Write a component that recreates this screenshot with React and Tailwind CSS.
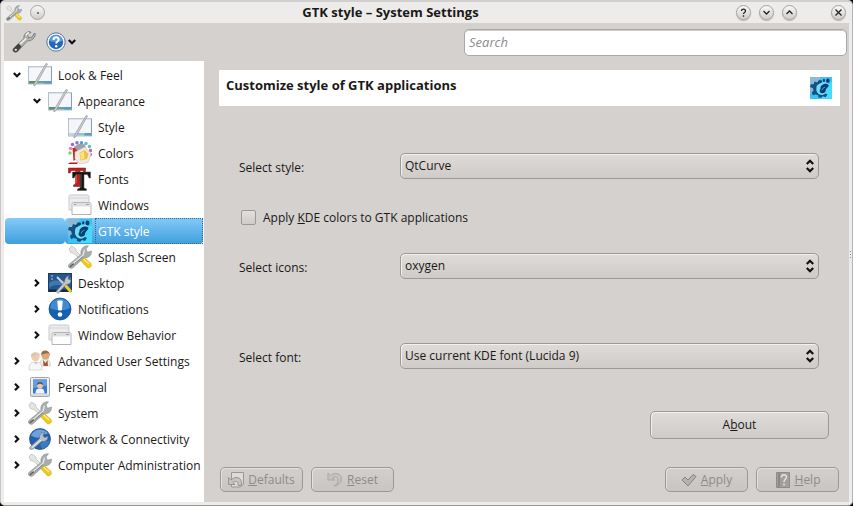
import { clsx } from 'clsx';

const iconBox = 'h-6 w-6 shrink-0';

function ToolsIcon({ className = iconBox }) {
  return (
    <svg viewBox="0 0 24 24" className={className} fill="none">
      <path d="M1 4l2.500-3 4 2.500.5 2.500L15.500 13.500l-2 2L6 8.500 2.500 7.500z" fill="#e4e4e1" stroke="#b0b0ac" strokeWidth=".6" />
      <path d="M15.500 11.500l7.500 7c1.500 2.500-1.500 5.500-4 4L12 15z" fill="#f0c818" stroke="#c9a224" strokeWidth=".5" />
      <path d="M15.500 14l5.500 5" stroke="#ffec7a" strokeWidth="1.600" />
      <path d="M.8 19.500L13 9.500C12 5.500 14.500 1 19 .8h1.500L18 4l1.500 3.300L23.500 6C24 10 20.500 13.500 16.300 12.500L5 22.800C2.500 24.500-1 22 .8 19.500z" fill="#a9adad" stroke="#80868a" strokeWidth=".5" />
      <path d="M4 19.500L15 10.200l1.500-5.500" stroke="#e4e7e6" strokeWidth="1.400" />
      <path d="M1.800 22l4-3.300" stroke="#5e6363" strokeWidth="1.600" />
      <path d="M7 18.500l8-7" stroke="#747b7c" strokeWidth=".8" />
    </svg>
  );
}

function WrenchIcon() {
  return (
    <svg viewBox="0 0 24 24" className={iconBox} fill="none">
      <path d="M1.500 18.500L12 8.500C11.500 5 13.500 2 18 1.500l1 1-3.500 1.500 1 4L20 7l2.500-4 .8.8C23 8 20 11 15.500 10.800L5.500 21.500c-2.500 2-6-.7-4-3z" fill="#b4b4b2" stroke="#6d6d6c" strokeWidth=".8" />
      <path d="M1.500 18.500l5-5 3 3-4 5c-2.500 2-6-.7-4-3z" fill="#424242" />
      <ellipse cx="3.800" cy="19.800" rx="1.300" ry="1.100" fill="#ddd" />
      <path d="M8 14l6-5.500M14 5.500c.5-1.500 1.500-2.500 3-3" stroke="#f4f4f4" strokeWidth="1.500" />
    </svg>
  );
}

function HelpIcon() {
  return (
    <svg viewBox="0 0 20 20" className="h-5 w-5">
      <circle cx="10" cy="10" r="9.200" fill="#f1f4f8" stroke="#53769f" strokeWidth="1" />
      <circle cx="10" cy="10" r="7.200" fill="#2468b5" />
      <path d="M3.500 9a6.500 6 0 0 1 13 0c-4 1.500-9 1.500-13 0z" fill="#5c9bdc" />
      <path d="M7.500 8c0-3.800 5.400-3.400 5.200-.4-.1 1.900-2.500 2-2.500 4" fill="none" stroke="#fff" strokeWidth="2" />
      <circle cx="10.200" cy="14.200" r="1.200" fill="#fff" />
    </svg>
  );
}

function StyleIcon({ green }) {
  return (
    <svg viewBox="0 0 24 24" className={iconBox}>
      <rect x=".5" y="3.500" width="23" height="17.500" fill="#f5f6f9" stroke="#b3c0d0" />
      <path d="M1 4h22" stroke="#c8cfd8" />
      <path d="M1 18h22v2.500H1z" fill={green ? '#69a0a0' : '#8fc0df'} />
      <path d="M1 18h6l-1 2.500H1z" fill={green ? '#5f8e63' : '#c5d4df'} />
      <path d="M17 18h6v2.500h-7z" fill="#5b9ab8" />
      <path d="M23.500 4v17" stroke="#7f9fbc" />
      <path d="M6 21L18 .5l1.500.5L8 21.500 6 23z" fill="#d0d1d3" stroke="#919496" strokeWidth=".7" />
    </svg>
  );
}

const dots = [
  [2, 12, '#8bd13f'], [2.500, 7.500, '#e57bd6'], [4.500, 3.500, '#b356d3'], [9, 1.700, '#6f7fd3'], [13.500, 1.700, '#4e9be0'],
  [18, 2.500, '#50c1d8'], [21.500, 5.500, '#57c9a0'], [22.500, 9.500, '#d760b2'], [22.300, 13.500, '#a44fd0'],
];

function ColorsIcon() {
  return (
    <svg viewBox="0 0 24 24" className={iconBox}>
      {dots.map(([x, y, color]) => (
        <circle key={color} cx={x} cy={y} r="1.700" fill={color} />
      ))}
      <path d="M4.500 7H10v10l-4.500 3z" fill="#c92727" />
      <path d="M6 6l5-3 5.500.5L18 8l-8 2z" fill="#9fa1a8" stroke="#8d9096" strokeWidth=".5" />
      <path d="M7 11l10-5 6 7-3 8.500-8 1.500-5-5z" fill="#efebdf" stroke="#c8c5bb" strokeWidth=".6" />
      <path d="M11.500 11.500L17 9l3.500 4-1.500 5-6.500 1.500z" fill="#efc040" />
      <path d="M12 12l4-1.700.5 7.200-3.500 1.500z" fill="#fadf85" />
      <path d="M2 21.500h8L9 23H0z" fill="#c41212" />
    </svg>
  );
}

function FontsIcon() {
  return (
    <svg viewBox="0 0 24 24" className={iconBox}>
      <path d="M.5 1h17v5h-1.500l-1-2.500h-3V17l2 1v1.500H5.500V18l2-1V3.500h-4L2 6H.5z" fill="#c0201c" stroke="#6b1512" strokeWidth=".5" />
      <path d="M8 4v12" stroke="#ea6a60" />
      <path d="M4.500 5h18v6H21l-1.500-3.500h-3.500V21l2.500 1v1.500h-9V22l2.500-1V7.500H8L6 11H4.500z" fill="#141414" stroke="#555" strokeWidth=".5" />
      <path d="M13 7v14" stroke="#555" />
    </svg>
  );
}

function WindowsIcon() {
  return (
    <svg viewBox="0 0 24 24" className={iconBox}>
      <path d="M1 3.500q0-1.500 1.500-1.500h17q1.500 0 1.500 1.500V17H1z" fill="#ececee" stroke="#c9cacd" />
      <path d="M1.500 5h19" stroke="#d6d6d9" />
      <path d="M4 11q0-1.500 1.500-1.500h16q1.500 0 1.500 1.500v10.500H4z" fill="#fdfdfd" stroke="#b4b5b9" />
      <path d="M4.500 10h18v3.500h-18z" fill="#dededf" />
      <path d="M6 11.500h2M18 11.500h3" stroke="#a2a3a6" />
    </svg>
  );
}

function GtkIcon({ className = iconBox }) {
  return (
    <svg viewBox="0 0 24 24" className={className}>
      <rect width="24" height="24" fill="#3bc4f3" />
      <path d="M0 0h12L5 12 0 18z" fill="#8bb9d6" />
      <path d="M18 10l6-5v19H11z" fill="#45dcfb" />
      <path d="M5 5l3 1 2-3 3 2-2 3-3 2-1 5 2 3 4 1 4-1 2 1-2 3-3-1-2 2-3-1v-2l-3-1-3 1-1-3 2-2-1-3-3-1 1-3h3z" fill="#125183" />
      <path d="M7 12c0-4 3-5 7-6 5-1 7 1 6 4-1 2-3 3-3 6 0 4-6 5-8.500 1.500C7 15.500 7 14 7 12z" fill="#72dbfa" />
      <path d="M11.500 12c0-4 6.500-6 8.500-3.500 1.500 2.500-2.500 3-2.800 6-.3 3.500-5 4.500-6.500 1.500-.7-1.700.8-2 .8-4z" fill="#073c71" />
      <path d="M13 14.500c.5-2 2-3 3.500-3.500" stroke="#3fc3f0" fill="none" />
      <g fill="#073c71">
        <ellipse cx="19.500" cy="4" rx="2" ry="2.400" />
        <ellipse cx="15.200" cy="3.800" rx="1.200" ry="1.600" />
        <ellipse cx="12" cy="4.800" rx="1" ry="1.300" />
        <ellipse cx="9" cy="6.800" rx=".9" ry="1.200" />
      </g>
    </svg>
  );
}

function DesktopIcon() {
  return (
    <svg viewBox="0 0 24 24" className={iconBox}>
      <rect x=".5" y="2.500" width="23" height="18" fill="#27568e" stroke="#193b66" />
      <path d="M1 12c7-6 14 2 22-6v6c-8 5-15-1-22 5z" fill="#3d78b3" />
      <path d="M3 5h2M3 8h2" stroke="#b5cfe8" />
      <path d="M1 19.500h22" stroke="#16283d" strokeWidth="2" />
      <path d="M9 6l10 10" stroke="#d3d5d5" strokeWidth="1.800" />
      <path d="M17 14l6 7" stroke="#f0c92a" strokeWidth="3" />
      <path d="M8 20.500l8.500-9.500c0-3 1.500-5.500 4.500-6.500l-1 3.500 3 1c0 3-2 4.500-5 4.500L10 22.500z" fill="#c3c6c7" stroke="#5a626a" strokeWidth=".5" />
    </svg>
  );
}

function NotificationsIcon() {
  return (
    <svg viewBox="0 0 24 24" className={iconBox}>
      <circle cx="12" cy="12" r="11" fill="#1560b0" stroke="#0e4a90" strokeWidth=".7" />
      <path d="M2 11a10 9.500 0 0 1 20 0c-5 3-15 3-20 0z" fill="#4189d0" />
      <path d="M9.800 4h4.400l-.7 9h-3z" fill="#fff" stroke="#fff" strokeLinejoin="round" />
      <circle cx="12" cy="17.500" r="2.300" fill="#fff" />
    </svg>
  );
}

function UsersIcon() {
  return (
    <svg viewBox="0 0 24 24" className={iconBox}>
      <path d="M12 15c0-4 2-5 5.500-5s5 2 5 6v1H12z" fill="#eeeae5" stroke="#d0c8be" strokeWidth=".6" />
      <path d="M15 11l2.500 3 2-3 .5 6h-4.500z" fill="#a8583c" />
      <circle cx="17.500" cy="6.500" r="4" fill="#dba97c" />
      <path d="M13 6c0-6 9-6 9 1l-1.500-3-5 1z" fill="#9a6a45" />
      <path d="M1 21c0-6 2-8 6.500-8s6.500 2 6.500 8z" fill="#f7f7f7" stroke="#c8cbcd" strokeWidth=".7" />
      <path d="M6 13l2 3 2-3z" fill="#b8d1e2" />
      <circle cx="7.500" cy="8" r="4.200" fill="#f0ccb0" />
      <path d="M3 8c-1-6 9-6 9-1L9 5z" fill="#dac7ad" />
    </svg>
  );
}

function PersonalIcon() {
  return (
    <svg viewBox="0 0 24 24" className={iconBox}>
      <rect x="2.500" y="2.500" width="19" height="19" rx="1" fill="#eeeeed" stroke="#a4a6aa" />
      <rect x="5" y="4.500" width="14" height="14" fill="#3579d7" />
      <path d="M5 4.500h14v6L5 13z" fill="#629ee8" />
      <path d="M7.500 18.500c0-4 1.500-5 4.500-5s4.500 1 4.500 5z" fill="#f1f3f5" />
      <circle cx="12" cy="10.500" r="3" fill="#edc5a4" />
      <path d="M8.800 10c0-4 6.400-4 6.400 0L12 8.500z" fill="#5a4a46" />
      <path d="M3 20h18" stroke="#c7c8ca" />
    </svg>
  );
}

function NetworkIcon() {
  return (
    <svg viewBox="0 0 24 24" className={iconBox}>
      <circle cx="12" cy="12" r="10.500" fill="#2560a8" stroke="#194680" strokeWidth=".7" />
      <path d="M3 9c2-7 11-9 17-3-3 3-6-1-8 3s-6 0-9 0z" fill="#6ba2dd" />
      <path d="M12 17c4-4 7-2 10-4-1 5-4 8-8 9z" fill="#397cc4" />
      <path d="M2 20l9.500-8.500c-.5-3 1.500-6 5-6L15 8.500l1.500 2 3.500-1c0 3.500-2.500 5.500-6.500 5L5 22c-2 1-4.500 0-3-2z" fill="#b5c0c8" stroke="#5f7488" strokeWidth=".6" />
      <path d="M4 20.500l9-7.500" stroke="#f4f6f7" />
    </svg>
  );
}

function Chevron({ open }) {
  return (
    <svg viewBox="0 0 8 8" className="h-2 w-2" fill="none" stroke="#111" strokeWidth="2.200">
      {open ? <path d="M.8 2L4 5.200 7.200 2" /> : <path d="M2 .8L5.200 4 2 7.200" />}
    </svg>
  );
}

const tree = [
  { label: 'Look & Feel', depth: 0, open: true, icon: <StyleIcon green /> },
  { label: 'Appearance', depth: 1, open: true, icon: <StyleIcon green /> },
  { label: 'Style', depth: 2, icon: <StyleIcon /> },
  { label: 'Colors', depth: 2, icon: <ColorsIcon /> },
  { label: 'Fonts', depth: 2, icon: <FontsIcon /> },
  { label: 'Windows', depth: 2, icon: <WindowsIcon /> },
  { label: 'GTK style', depth: 2, selected: true, icon: <GtkIcon /> },
  { label: 'Splash Screen', depth: 2, icon: <ToolsIcon /> },
  { label: 'Desktop', depth: 1, open: false, icon: <DesktopIcon /> },
  { label: 'Notifications', depth: 1, open: false, icon: <NotificationsIcon /> },
  { label: 'Window Behavior', depth: 1, open: false, icon: <WindowsIcon /> },
  { label: 'Advanced User Settings', depth: 0, open: false, icon: <UsersIcon /> },
  { label: 'Personal', depth: 0, open: false, icon: <PersonalIcon /> },
  { label: 'System', depth: 0, open: false, icon: <ToolsIcon /> },
  { label: 'Network & Connectivity', depth: 0, open: false, icon: <NetworkIcon /> },
  { label: 'Computer Administration', depth: 0, open: false, icon: <ToolsIcon /> },
];

const indent = ['w-5', 'w-10', 'w-15'];
const selectedBg = 'bg-linear-to-b from-[#83cbf9] to-[#3c9fdc]';

function TreeItem({ item }) {
  return (
    <li className="flex h-[26px]">
      <div className={clsx('flex shrink-0 items-center justify-end', indent[item.depth], item.selected && 'rounded-sm', item.selected && selectedBg)}>
        {item.open !== undefined && (
          <button type="button" aria-label={`Toggle ${item.label}`} className="mr-1">
            <Chevron open={item.open} />
          </button>
        )}
      </div>
      <a
        href="#"
        className={clsx('flex flex-1 items-center pl-[3px] whitespace-nowrap', item.selected && 'rounded-sm text-white', item.selected && selectedBg)}
      >
        {item.icon}
        <span className={clsx('ml-[3px] flex flex-1 items-center self-stretch border border-dotted pt-[2px] pl-[2px]', item.selected ? 'border-[#356a94]' : 'border-transparent')}>
          {item.label}
        </span>
      </a>
    </li>
  );
}

function TitleButton({ label, children }) {
  return (
    <button
      type="button"
      aria-label={label}
      className="flex h-[15px] w-[15px] items-center justify-center rounded-full border border-[#a5a4a2] bg-linear-to-b from-[#f8f8f8] to-[#cfcecc] shadow-[0_1px_1px_#b5b4b2]"
    >
      <svg viewBox="0 0 9 9" className="h-[9px] w-[9px]" fill="none" stroke="#222" strokeWidth="1.300">
        {children}
      </svg>
    </button>
  );
}

function SelectRow({ id, label, value, className }) {
  return (
    <div className={clsx('flex items-center', className)}>
      <label htmlFor={id} className="w-[161px] shrink-0 pt-1">{label}</label>
      <div className="grid flex-1 items-center">
        <select
          id={id}
          className="col-start-1 row-start-1 h-[26px] w-full appearance-none rounded-[5px] border border-[#9b9895] bg-linear-to-b from-[#dedbd8] to-[#cfcbc8] px-1 shadow-[inset_1px_1px_0_#f3f1ef]"
        >
          <option>{value}</option>
        </select>
        <svg viewBox="0 0 8 14" className="pointer-events-none col-start-1 row-start-1 mr-[5px] h-[14px] w-2 justify-self-end" fill="none" stroke="#111" strokeWidth="2.200">
          <path d="M.8 5L4 1.800 7.200 5M.8 9L4 12.200 7.200 9" />
        </svg>
      </div>
    </div>
  );
}

function ActionButton({ icon, accessKey, children }) {
  return (
    <button
      type="button"
      disabled
      className="flex h-[25px] w-[83px] items-center justify-center gap-1 rounded-[5px] border border-[#9b9895] bg-linear-to-b from-[#d3cfcc] to-[#c9c5c2] text-[#8f8b88] shadow-[inset_1px_1px_0_#e4e1df]"
    >
      {icon}
      <span><u>{accessKey}</u>{children}</span>
    </button>
  );
}

export default function App() {
  return (
    <div className="min-h-screen bg-black">
      <div className="flex min-h-screen flex-col rounded-[5px] border-t-2 border-r border-b border-l border-t-[#d2d0ce] border-r-[#b5b3b1] border-b-[#989693] border-l-[#c8c6c4] bg-[#edecea] font-['Open_Sans','Noto_Sans',sans-serif] text-[12px] leading-4 text-[#1a1918]">
        <header className="flex h-[21px] items-center pr-[6px] pl-[5px]">
          <ToolsIcon className="h-4 w-4" />
          <button type="button" aria-label="Window menu" className="ml-2 flex h-[15px] w-[15px] items-center justify-center rounded-full border border-[#a5a4a2] bg-linear-to-b from-[#f8f8f8] to-[#cfcecc]">
            <span className="h-[2px] w-[2px] bg-[#777]" />
          </button>
          <h1 className="flex-1 pb-[2px] text-center text-[13px] font-bold">GTK style – System Settings</h1>
          <div className="flex gap-2">
            <TitleButton label="Help"><path d="M2.500 3c0-2.500 4-2.500 4 0 0 1.500-2 1.500-2 3M4.500 7.200v1.500" /></TitleButton>
            <TitleButton label="Minimize"><path d="M1.500 3l3 3 3-3" /></TitleButton>
            <TitleButton label="Maximize"><path d="M1.500 6l3-3 3 3" /></TitleButton>
          </div>
          <div className="ml-[34px]">
            <TitleButton label="Close"><path d="M1.500 1.500l6 6M7.500 1.500l-6 6" /></TitleButton>
          </div>
        </header>

        <div className="mr-[3px] mb-[3px] ml-[3px] flex flex-1 flex-col bg-[#d5d1ce]">
          <div className="flex h-[38px] items-center pl-2">
            <button type="button" aria-label="Configure"><WrenchIcon /></button>
            <button type="button" aria-label="Help" className="ml-[10px] flex items-center gap-[2px]">
              <HelpIcon />
              <Chevron open />
            </button>
            <input
              type="text"
              aria-label="Search"
              placeholder="Search"
              className="mr-[2px] ml-auto h-[27px] w-[383px] rounded-[5px] border border-[#aaa7a4] bg-white px-1 text-[13px] italic shadow-[inset_0_1px_0_#d0cecc] placeholder:text-[#8c8c8c]"
            />
          </div>

          <div className="flex flex-1">
            <ul className="w-[200px] shrink-0 bg-white pt-px pr-px pl-px">
              {tree.map((item) => (
                <TreeItem key={item.label} item={item} />
              ))}
            </ul>

            <main className="flex flex-1 flex-col pt-[9px] pr-[9px] pb-[10px] pl-[15px]">
              <div className="flex h-9 items-center justify-between bg-white pr-2 pl-[7px]">
                <h2 className="pb-[6px] text-[13px] font-bold">Customize style of GTK applications</h2>
                <GtkIcon className="h-[22px] w-[22px]" />
              </div>

              <form className="flex flex-col pt-[47px] pr-[21px] pl-5">
                <SelectRow id="style" label="Select style:" value="QtCurve" />
                <label className="mt-7 flex h-5 items-center gap-[7px] pl-[2px]">
                  <input type="checkbox" className="h-[15px] w-[15px] appearance-none rounded-[2px] border border-[#9b9895] bg-linear-to-b from-[#e2dfdd] to-[#d0ccc9]" />
                  <span className="pt-[2px]">Apply <u>K</u>DE colors to GTK applications</span>
                </label>
                <SelectRow id="icons" label="Select icons:" value="oxygen" className="mt-[26px]" />
                <SelectRow id="font" label="Select font:" value="Use current KDE font (Lucida 9)" className="mt-16" />
              </form>

              <div className="mt-[42px] flex justify-end pr-[11px]">
                <button type="button" className="h-7 w-[179px] rounded-[5px] border border-[#9b9895] bg-linear-to-b from-[#dedbd8] to-[#cfcbc8] shadow-[inset_1px_1px_0_#f3f1ef]">
                  A<u>b</u>out
                </button>
              </div>

              <footer className="mt-auto flex gap-2 px-px pt-4">
                <ActionButton
                  accessKey="D"
                  icon={
                    <svg viewBox="0 0 16 16" className="h-4 w-4" stroke="#999693">
                      <path d="M3.500.5h12V12l-3 3h-9z" fill="#dedcda" />
                      <path d="M.5 5.500v7h6.500L5 10.500c3.500-2.500 5.500-.5 5 3h3.500c1-8-5-10.500-10.500-5.500z" fill="#c5c2c0" />
                    </svg>
                  }
                >
                  efaults
                </ActionButton>
                <ActionButton
                  accessKey="R"
                  icon={
                    <svg viewBox="0 0 16 16" className="h-4 w-4" stroke="#aaa7a4">
                      <path d="M1 1v7h7L5.500 6c4-3 7 0 4.500 6l-3 2c9-1 10-12 2-12.500C7 1.500 5 2 3.500 3.500z" fill="#c5c2c0" />
                    </svg>
                  }
                >
                  eset
                </ActionButton>
                <div className="flex-1" />
                <ActionButton
                  accessKey="A"
                  icon={
                    <svg viewBox="0 0 16 16" className="h-4 w-4" stroke="#858280">
                      <path d="M1 8l3-3 3 3 5-5.500 3 2L7 14z" fill="#b5b2af" />
                    </svg>
                  }
                >
                  pply
                </ActionButton>
                <ActionButton
                  accessKey="H"
                  icon={
                    <svg viewBox="0 0 16 16" className="h-4 w-4" fill="none">
                      <path d="M1.500.5h13v15h-13z" fill="#a19e9b" stroke="#8e8b88" />
                      <path d="M4 1v14" stroke="#75726f" />
                      <path d="M6.500 5.500c0-3.500 5-3.500 5-.5 0 2-2.500 2-2.500 5M9 11.500v2" stroke="#e6e4e2" strokeWidth="1.500" />
                    </svg>
                  }
                >
                  elp
                </ActionButton>
              </footer>
            </main>
            <div className="-mr-[3px] flex w-[3px] flex-col items-center justify-center gap-[2px] pb-[55px]">
              <span className="h-px w-px bg-[#8d8a88]" />
              <span className="h-px w-px bg-[#8d8a88]" />
              <span className="h-px w-px bg-[#8d8a88]" />
            </div>
          </div>
        </div>
      </div>
    </div>
  );
}
